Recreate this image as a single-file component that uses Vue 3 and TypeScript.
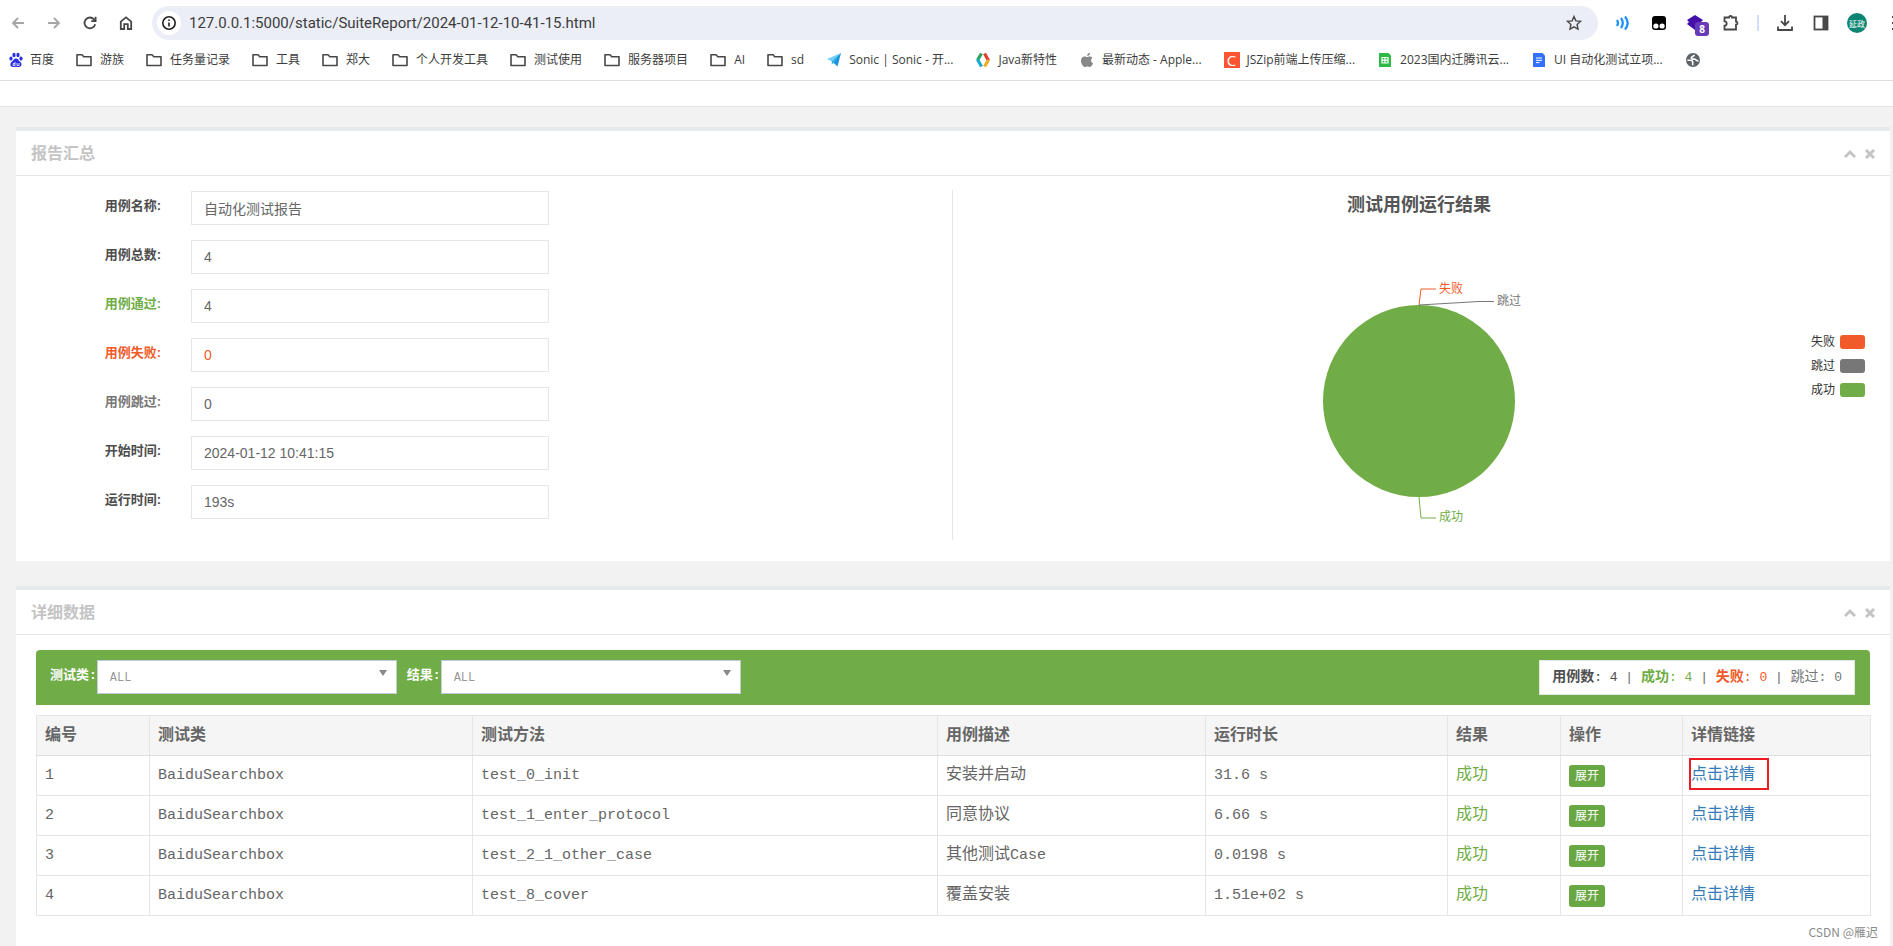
<script setup lang="ts">
import { ref } from 'vue'

interface Bookmark { icon: string; label: string }
interface Field { id: string; label: string; value: string; tone: string }
interface CaseRow { id: number; cls: string; method: string; desc: string; latin: string; time: string; marked: boolean }

const bookmarks: Bookmark[] = [
  { icon: 'paw', label: '百度' },
  { icon: 'folder', label: '游族' },
  { icon: 'folder', label: '任务量记录' },
  { icon: 'folder', label: '工具' },
  { icon: 'folder', label: '郑大' },
  { icon: 'folder', label: '个人开发工具' },
  { icon: 'folder', label: '测试使用' },
  { icon: 'folder', label: '服务器项目' },
  { icon: 'folder', label: 'AI' },
  { icon: 'folder', label: 'sd' },
  { icon: 'plane', label: 'Sonic | Sonic - 开...' },
  { icon: 'java', label: 'Java新特性' },
  { icon: 'apple', label: '最新动态 - Apple...' },
  { icon: 'csdn', label: 'JSZip前端上传压缩...' },
  { icon: 'sheet', label: '2023国内迁腾讯云...' },
  { icon: 'doc', label: 'UI 自动化测试立项...' },
  { icon: 'globe', label: '' },
]

const fields: Field[] = [
  { id: 'name', label: '用例名称:', value: '自动化测试报告', tone: '' },
  { id: 'total', label: '用例总数:', value: '4', tone: '' },
  { id: 'passed', label: '用例通过:', value: '4', tone: 'pass' },
  { id: 'failed', label: '用例失败:', value: '0', tone: 'fail' },
  { id: 'skipped', label: '用例跳过:', value: '0', tone: 'skip' },
  { id: 'start', label: '开始时间:', value: '2024-01-12 10:41:15', tone: '' },
  { id: 'duration', label: '运行时间:', value: '193s', tone: '' },
]

const legend = [
  { label: '失败', tone: 'fail' },
  { label: '跳过', tone: 'skip' },
  { label: '成功', tone: 'pass' },
]

const totals = [
  { label: '用例数', value: 4, tone: 'all' },
  { label: '成功', value: 4, tone: 'pass' },
  { label: '失败', value: 0, tone: 'fail' },
  { label: '跳过', value: 0, tone: 'skip' },
]

const columns = ['编号', '测试类', '测试方法', '用例描述', '运行时长', '结果', '操作', '详情链接']

const rows: CaseRow[] = [
  { id: 1, cls: 'BaiduSearchbox', method: 'test_0_init', desc: '安装并启动', latin: '', time: '31.6 s', marked: true },
  { id: 2, cls: 'BaiduSearchbox', method: 'test_1_enter_protocol', desc: '同意协议', latin: '', time: '6.66 s', marked: false },
  { id: 3, cls: 'BaiduSearchbox', method: 'test_2_1_other_case', desc: '其他测试', latin: 'Case', time: '0.0198 s', marked: false },
  { id: 4, cls: 'BaiduSearchbox', method: 'test_8_cover', desc: '覆盖安装', latin: '', time: '1.51e+02 s', marked: false },
]

const url = ref('127.0.0.1:5000/static/SuiteReport/2024-01-12-10-41-15.html')
const suite = ref('ALL')
const result = ref('ALL')
</script>

<template>
  <div class="window">
    <header class="browser">
      <div class="toolbar">
        <nav class="nav-buttons" aria-label="导航">
          <button class="tool faded" aria-label="后退">
            <svg viewBox="0 0 16 16"><path d="M14 8H3M8 3 3 8l5 5" /></svg>
          </button>
          <button class="tool faded" aria-label="前进">
            <svg viewBox="0 0 16 16"><path d="M2 8h11M8 3l5 5-5 5" /></svg>
          </button>
          <button class="tool" aria-label="刷新">
            <svg viewBox="0 0 16 16"><path d="M13.2 9.2A5.4 5.4 0 1 1 12 4.3l1.2 1.2M13.6 1.8v4.4H9.2" /></svg>
          </button>
          <button class="tool" aria-label="主页">
            <svg viewBox="0 0 16 16"><path d="M2.8 14V6.6L8 2.4l5.2 4.2V14H9.8V9.2H6.2V14z" /></svg>
          </button>
        </nav>
        <div class="address">
          <button class="info" aria-label="网站信息">
            <svg viewBox="0 0 16 16"><circle cx="8" cy="8" r="6.2" /><path d="M8 7.4v4M8 4.6v1.4" /></svg>
          </button>
          <input v-model="url" class="url" aria-label="地址" />
          <button class="tool" aria-label="收藏">
            <svg viewBox="0 0 16 16"><path class="thin" d="m8 1.6 1.9 4.3 4.6.5-3.4 3.1.9 4.6L8 11.8l-4 2.3.9-4.6L1.5 6.4l4.6-.5z" /></svg>
          </button>
        </div>
        <div class="extensions">
          <button class="tool" aria-label="朗读">
            <svg viewBox="0 0 16 16"><g stroke="#1a8fff" stroke-width="2.2"><path d="M2 5q2 3 0 6M6 3q3.600 5 0 10M10 1.500q5.400 6.500 0 13" /></g></svg>
          </button>
          <button class="tool" aria-label="脚本管理">
            <svg viewBox="0 0 16 16"><rect class="solid" x="1" y="1" width="14" height="14" rx="3" fill="#000" /><circle class="solid" cx="4.900" cy="11" r="2.600" fill="#fff" /><circle class="solid" cx="11.100" cy="11" r="2.600" fill="#fff" /></svg>
          </button>
          <button class="tool badged" aria-label="扩展">
            <svg viewBox="0 0 16 16"><path class="solid" d="m8 0 8 5-2 2 2 2-8 6-8-6 2-2-2-2z" fill="#4510a8" /></svg>
            <span class="badge">8</span>
          </button>
          <button class="tool" aria-label="扩展程序">
            <svg viewBox="0 0 16 16"><path d="M1.500 2.500H6a1.500 1.500 0 0 1 3 0h4v4.200a1.500 1.500 0 0 1 0 3v4.800H1.500v-3.800a2.200 2.200 0 0 0 0-4.400z" /></svg>
          </button>
          <i class="bar"></i>
          <button class="tool" aria-label="下载">
            <svg viewBox="0 0 16 16"><path d="M8 0v10M4 6.200l4 4 4-4M1 11.500V15h14v-3.500" /></svg>
          </button>
          <button class="tool" aria-label="侧边栏">
            <svg viewBox="0 0 16 16"><rect x="1.500" y="1.500" width="13" height="13" /><path class="solid" d="M9.500 1.500h5v13h-5z" fill="#474747" /></svg>
          </button>
          <button class="avatar" aria-label="个人资料">延政</button>
          <button class="tool more" aria-label="更多">
            <svg viewBox="0 0 16 16"><path d="M7 2h2M7 8h2M7 14h2" /></svg>
          </button>
        </div>
      </div>
      <nav class="bookmarks" aria-label="书签">
        <a v-for="(b, i) in bookmarks" :key="i" href="#" class="bookmark" :class="b.icon" :aria-label="b.label || '网站'">
          <svg v-if="b.icon === 'folder'" viewBox="0 0 16 16"><path d="M1 2.800h5l1.800 2H15v8.700H1z" fill="none" stroke="#474747" stroke-width="1.600" stroke-linejoin="round" /></svg>
          <svg v-else-if="b.icon === 'paw'" viewBox="0 0 16 16" fill="#2b2fe0"><ellipse cx="3" cy="6.600" rx="1.600" ry="2.100" /><ellipse cx="6" cy="3" rx="1.600" ry="2.200" /><ellipse cx="10" cy="3" rx="1.600" ry="2.200" /><ellipse cx="13" cy="6.600" rx="1.600" ry="2.100" /><path d="M8 6.400c2.200 0 2.600 2.200 4.400 3.600 2 1.700 1 5-1.400 5-1.200 0-2-.3-3-.3s-1.800.3-3 .3c-2.600 0-3.500-3.200-1.500-5C5.400 8.600 5.800 6.400 8 6.400z" /><path d="M7 10v3.600H5.200v-2H7M9 11v2.500h2V11" fill="none" stroke="#fff" stroke-width=".8" /></svg>
          <svg v-else-if="b.icon === 'plane'" viewBox="0 0 16 16"><path d="M15 1 1 7l5 2.500z" fill="#6fd0f7" /><path d="M15 1 6 9.500l5.500 5z" fill="#1c93dc" /><path d="M15 1 6 9.500l-.5 3 2-1.500z" fill="#2fb0ee" /></svg>
          <svg v-else-if="b.icon === 'java'" viewBox="0 0 16 16" fill="none" stroke-width="3.200"><path d="M6.500 1.500 2.500 8" stroke="#25a55f" /><path d="m2.500 7.500 4 7" stroke="#1ba8c9" /><path d="m9.500 1.500 4 7" stroke="#e2402b" /><path d="m13.500 8-4 6.500" stroke="#f7a823" /></svg>
          <svg v-else-if="b.icon === 'apple'" viewBox="0 0 16 16" fill="#888"><path d="M10.800 4.400c1.300 0 2.300.7 2.800 1.500-2.300 1.300-1.900 4.500.5 5.400-.6 1.700-1.900 3.700-3.200 3.700-1 0-1.300-.6-2.500-.6s-1.600.6-2.500.6C4.200 15 2 11.600 2 8.700c0-2.800 1.700-4.300 3.500-4.300 1.200 0 2.100.7 2.800.7.700 0 1.500-.7 2.500-.7zM8.200 3.900C8.100 2.200 9.500.8 11 .7c.2 1.700-1.200 3.200-2.800 3.200z" /></svg>
          <span v-else-if="b.icon === 'csdn'" class="letter">C</span>
          <svg v-else-if="b.icon === 'sheet'" viewBox="0 0 16 16"><path d="M2 1h9.500L14 3.500V15H2z" fill="#2fb947" /><path d="M5 5.500h6v5.500H5zM8 5.500V11M5 8.200h6" fill="none" stroke="#fff" stroke-width="1.200" /></svg>
          <svg v-else-if="b.icon === 'doc'" viewBox="0 0 16 16"><path d="M2 1h9.500L14 3.500V15H2z" fill="#3370ff" /><path d="M5 6h6M5 8.300h6M5 10.600h3.500" fill="none" stroke="#fff" /></svg>
          <svg v-else viewBox="0 0 16 16"><circle cx="8" cy="8" r="7" fill="#5f6368" /><path d="M2.400 8.200h3c1.700 0 2.300.9 2.300 2v3M9.200 2.800c-.2 1.800-2.600 1.500-2.900 3-.2 1.300 1.800 1.300 3.200 1.300 1.500 0 1 2 4 1.800" fill="none" stroke="#fff" stroke-width="1.600" /></svg>
          <span v-if="b.label">{{ b.label }}</span>
        </a>
      </nav>
    </header>

    <main class="page">
      <section class="panel">
        <div class="panel-head">
          <h2>报告汇总</h2>
          <div class="panel-tools">
            <button aria-label="折叠"><svg viewBox="0 0 12 12"><path d="m1 9 5-5 5 5" /></svg></button>
            <button aria-label="关闭"><svg viewBox="0 0 12 12"><path d="m2 2 8 8M10 2l-8 8" /></svg></button>
          </div>
        </div>
        <div class="summary">
          <form class="fields" @submit.prevent>
            <div v-for="f in fields" :key="f.id" class="field" :class="f.tone">
              <label :for="f.id">{{ f.label }}</label>
              <input :id="f.id" :value="f.value" readonly />
            </div>
          </form>
          <div class="chart">
            <svg class="pie" viewBox="0 0 300 350" role="img" aria-label="测试用例运行结果">
              <text class="title" x="150" y="21" text-anchor="middle">测试用例运行结果</text>
              <circle cx="150" cy="211" r="96" fill="#70ad47" />
              <path d="M150 115 152 99h15" stroke="#f15a29" />
              <path d="M150 115 210 111.500h15" stroke="#777" />
              <path d="M150 307 152 328h15" stroke="#70ad47" />
              <text x="170" y="103" fill="#f15a29">失败</text>
              <text x="228" y="115" fill="#777">跳过</text>
              <text x="170" y="331" fill="#70ad47">成功</text>
            </svg>
            <ul class="legend">
              <li v-for="l in legend" :key="l.label" :class="l.tone">{{ l.label }}<i></i></li>
            </ul>
          </div>
        </div>
      </section>

      <section class="panel grow">
        <div class="panel-head">
          <h2>详细数据</h2>
          <div class="panel-tools">
            <button aria-label="折叠"><svg viewBox="0 0 12 12"><path d="m1 9 5-5 5 5" /></svg></button>
            <button aria-label="关闭"><svg viewBox="0 0 12 12"><path d="m2 2 8 8M10 2l-8 8" /></svg></button>
          </div>
        </div>
        <div class="details">
          <div class="filters">
            <label for="suite">测试类:</label>
            <span class="pick"><select id="suite" v-model="suite"><option>ALL</option></select></span>
            <label for="result">结果:</label>
            <span class="pick"><select id="result" v-model="result"><option>ALL</option></select></span>
            <p class="totals">
              <template v-for="(t, i) in totals" :key="t.label">{{ i ? ' | ' : '' }}<span :class="t.tone"><b>{{ t.label }}</b>: {{ t.value }}</span></template>
            </p>
          </div>
          <table>
            <colgroup><col v-for="n in 8" :key="n" :class="'c' + n" /></colgroup>
            <thead>
              <tr><th v-for="c in columns" :key="c" scope="col">{{ c }}</th></tr>
            </thead>
            <tbody>
              <tr v-for="r in rows" :key="r.id">
                <td>{{ r.id }}</td>
                <td>{{ r.cls }}</td>
                <td>{{ r.method }}</td>
                <td><span class="han">{{ r.desc }}</span>{{ r.latin }}</td>
                <td>{{ r.time }}</td>
                <td class="pass"><span class="han">成功</span></td>
                <td><button class="expand">展开</button></td>
                <td><a href="#" class="han" :class="{ marked: r.marked }">点击详情</a></td>
              </tr>
            </tbody>
          </table>
        </div>
      </section>
    </main>
    <div class="credit">CSDN @雁迟</div>
  </div>
</template>

<style>
body {
  margin: 0;
}
</style>

<style scoped>
* {
  box-sizing: border-box;
}

button {
  padding: 0;
  border: 0;
  background: none;
  font: inherit;
}

.window {
  position: relative;
  display: flex;
  flex-direction: column;
  min-height: 100vh;
  overflow: hidden;
  background: #f2f2f2;
  color: #666;
  font-family: "Liberation Sans", "Noto Sans CJK SC", sans-serif;
  font-size: 14px;
}

.browser {
  height: 107px;
  background: #fff;
  border-bottom: 1px solid #e4e4e4;
  font-family: "Open Sans", "Noto Sans CJK SC", sans-serif;
  color: #3c3c3c;
}

.toolbar {
  display: flex;
  align-items: center;
  gap: 14px;
  height: 40px;
  padding: 6px 0 0 10px;
}

.nav-buttons {
  display: flex;
  gap: 20px;
  padding-right: 4px;
}

.tool {
  flex: none;
  width: 16px;
  height: 16px;
}

.tool svg {
  display: block;
  width: 16px;
  height: 16px;
  overflow: visible;
  fill: none;
  stroke: #474747;
  stroke-width: 1.8;
}

.tool .thin {
  stroke-width: 1.4;
}

.tool .solid {
  stroke: none;
}

.faded svg {
  stroke: #a5a5a5;
}

.address {
  flex: 1;
  display: flex;
  align-items: center;
  gap: 8px;
  height: 34px;
  padding: 0 16px 0 5px;
  border-radius: 17px;
  background: #ebeef7;
}

.info {
  display: grid;
  place-items: center;
  width: 24px;
  height: 24px;
  border-radius: 12px;
  background: #fff;
}

.info svg {
  width: 16px;
  height: 16px;
  fill: none;
  stroke: #1f1f1f;
  stroke-width: 1.6;
}

.url {
  flex: 1;
  min-width: 0;
  padding: 0;
  border: 0;
  background: none;
  color: #3c3c3c;
  font: 15px Roboto, sans-serif;
}

.extensions {
  display: flex;
  align-items: center;
  gap: 20px;
  margin-right: -8px;
  padding-left: 3px;
}

.badged {
  position: relative;
}

.badge {
  position: absolute;
  left: 8px;
  top: 7px;
  width: 14px;
  height: 14px;
  border-radius: 3px;
  background: #673ab7;
  color: #fff;
  font: bold 10px/14px "Open Sans", sans-serif;
}

.bar {
  width: 2px;
  height: 16px;
  margin: 0 -2px;
  background: #cfdff8;
}

.avatar {
  width: 20px;
  height: 20px;
  margin: 0 -2px;
  border-radius: 10px;
  background: #0b8573;
  color: #fff;
  font-size: 8px;
  white-space: nowrap;
}

.bookmarks {
  display: flex;
  align-items: center;
  gap: 22px;
  height: 41px;
  padding-left: 8px;
  border-bottom: 1px solid #dedede;
}

.bookmark {
  display: flex;
  align-items: center;
  gap: 7px;
  color: #3c3c3c;
  font-size: 12px;
  line-height: 18px;
  white-space: nowrap;
  text-decoration: none;
}

.bookmark.folder {
  gap: 8px;
}

.bookmark.paw {
  gap: 6px;
}

.bookmark svg,
.letter {
  flex: none;
  width: 16px;
  height: 16px;
}

.letter {
  background: #fc5531;
  color: #fff;
  font-size: 15px;
  line-height: 16px;
  text-align: center;
}

.page {
  flex: 1;
  display: flex;
  flex-direction: column;
  gap: 25px;
  padding: 20px 3px 0 16px;
}

.panel {
  background: #fff;
  border-top: 4px solid #e7eaec;
}

.grow {
  flex: 1;
}

.panel-head {
  display: flex;
  align-items: center;
  justify-content: space-between;
  height: 45px;
  padding: 2px 14px 0 15px;
  border-bottom: 1px solid #e7e7e7;
}

h2 {
  margin: 0;
  color: #c4c4c4;
  font-size: 16px;
  line-height: 24px;
}

.panel-tools {
  display: flex;
  gap: 8px;
}

.panel-tools svg {
  display: block;
  width: 12px;
  height: 12px;
  fill: none;
  stroke: #c4c4c4;
  stroke-width: 3;
}

.summary {
  display: grid;
  grid-template-columns: 1fr 1fr;
  padding: 14px 0 21px;
}

.fields {
  display: flex;
  flex-direction: column;
  gap: 15px;
  padding-top: 1px;
  border-right: 1px solid #e7e7e7;
}

.field {
  display: grid;
  grid-template-columns: 145px minmax(0, 358px);
  gap: 30px;
}

.field label {
  padding-top: 5px;
  color: #4d4d4d;
  font-size: 13px;
  font-weight: bold;
  line-height: 20px;
  text-align: right;
}

.field input {
  height: 34px;
  padding: 0 12px;
  border: 1px solid #e5e6e7;
  color: #666;
  font: 14px "Liberation Sans", "Noto Sans CJK SC", sans-serif;
}

.field.fail input {
  color: #f15a29;
}

.field.pass label,
.pass {
  color: #70ad47;
}

.field.fail label,
.fail {
  color: #f15a29;
}

.field.skip label,
.skip {
  color: #777;
}

.chart {
  display: grid;
  grid-template-columns: 1fr 300px 1fr;
  padding: 0 20px 0 15px;
}

.pie {
  grid-column: 2;
  width: 300px;
  height: 350px;
  fill: none;
  font-size: 12px;
}

.title {
  fill: #555;
  font-size: 18px;
  font-weight: bold;
}

.legend {
  display: flex;
  flex-direction: column;
  gap: 10px;
  justify-self: end;
  margin: 145px 5px 0 0;
  padding: 0;
  list-style: none;
  font-size: 12px;
  line-height: 14px;
}

.legend li {
  display: flex;
  gap: 5px;
  color: #333;
}

.legend li i {
  width: 25px;
  height: 14px;
  border-radius: 3px;
  background: #70ad47;
}

.legend .fail i {
  background: #f15a29;
}

.legend .skip i {
  background: #777;
}

.details {
  padding: 15px 20px 31px;
  font-family: "Liberation Mono", "Noto Sans CJK SC", monospace;
}

.filters {
  display: flex;
  align-items: flex-start;
  height: 55px;
  margin-bottom: 10px;
  padding: 10px 15px 10px 14px;
  border-radius: 4px 4px 0 0;
  background: #70ad47;
}

.filters label {
  color: #fff;
  font-size: 13px;
  font-weight: bold;
  line-height: 32px;
}

.pick {
  position: relative;
  margin-right: 10px;
}

.pick::after {
  content: "";
  position: absolute;
  top: 10px;
  right: 10px;
  border: 4px solid transparent;
  border-top: 6px solid #888;
  border-bottom: 0;
}

.pick select {
  display: block;
  width: 300px;
  height: 34px;
  padding: 2px 12px 0;
  border: 1px solid #c2cad8;
  border-radius: 0;
  appearance: none;
  background: #fff;
  color: #999;
  font: 12px "Liberation Mono", monospace;
}

.totals {
  margin: 0 0 0 auto;
  padding: 0 12px;
  border: 1px solid #e5e6e7;
  background: #fff;
  font-size: 13px;
  line-height: 32px;
  white-space: nowrap;
}

.totals b {
  font-size: 14px;
}

.totals .all {
  color: #4d4d4d;
}

.totals .skip b {
  font-weight: normal;
}

table {
  width: 100%;
  table-layout: fixed;
  border-collapse: collapse;
  font-size: 15px;
  line-height: 24px;
}

.c1, .c6 { width: 113px; }
.c2 { width: 323px; }
.c3 { width: 465px; }
.c4 { width: 268px; }
.c5 { width: 242px; }
.c7 { width: 122px; }
.c8 { width: 188px; }

th,
td {
  height: 40px;
  padding: 0 8px;
  border: 1px solid #e5e5e5;
  text-align: left;
  vertical-align: middle;
}

th {
  background: #f5f5f5;
  border-bottom-color: #ddd;
  color: #666;
  font-size: 16px;
}

.han {
  font-size: 16px;
}

a.han {
  color: #337ab7;
  text-decoration: none;
}

.marked {
  position: relative;
}

.marked::after {
  content: "";
  position: absolute;
  inset: -8px -14px -6px -2px;
  border: 2px solid #ed1c24;
}

.expand {
  display: block;
  width: 36px;
  height: 22px;
  border-radius: 3px;
  background: #69a743;
  color: #fff;
  font-size: 12px;
}

.credit {
  position: absolute;
  right: 15px;
  bottom: 6px;
  color: #8a8a8a;
  font-family: "Noto Sans CJK SC", sans-serif;
  font-size: 12px;
  line-height: 18px;
}
</style>
